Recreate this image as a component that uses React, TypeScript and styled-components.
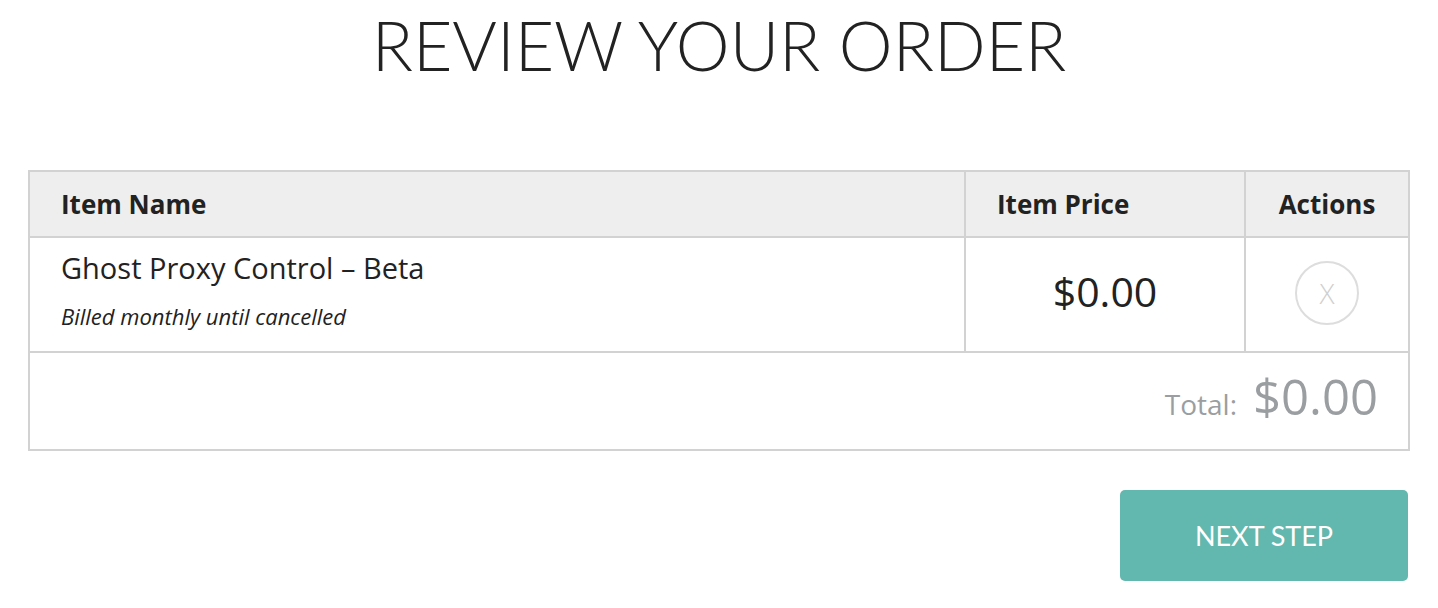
import React from "react";
import styled, { createGlobalStyle } from "styled-components";

const Global = createGlobalStyle`
  html, body { margin: 0; padding: 0; background: #fff; }
  body { font-family: "Open Sans", "Noto Sans", sans-serif; color: #222; }
`;

const Page = styled.div`
  padding: 0 28px;
  display: flex;
  flex-direction: column;
`;

const Title = styled.h1`
  margin: 0;
  padding-top: 0;
  height: 170px;
  text-align: center;
  font-family: Lato, sans-serif;
  font-weight: 300;
  font-size: 68px;
  line-height: 90px;
  color: #222;
  letter-spacing: 0;
`;

const Table = styled.table`
  width: 100%;
  border-collapse: collapse;
  table-layout: fixed;
  font-family: "Open Sans", "Noto Sans", sans-serif;
`;

const Th = styled.th<{ $align?: string; $w?: number }>`
  background: #eeeeee;
  border: 2px solid #d2d2d2;
  height: 66px;
  padding: 0 31px;
  text-align: ${(p) => p.$align || "left"};
  font-weight: 700;
  font-size: 26px;
  color: #222;
  width: ${(p) => (p.$w ? `${p.$w}px` : "auto")};
  box-sizing: border-box;
`;

const Td = styled.td<{ $align?: string }>`
  border: 2px solid #d2d2d2;
  height: 113px;
  padding: 0 31px;
  text-align: ${(p) => p.$align || "left"};
  vertical-align: middle;
`;

const ItemName = styled.div`
  font-size: 29px;
  line-height: 36px;
  color: #222;
  margin-top: -9px;
`;

const ItemNote = styled.div`
  font-size: 22px;
  line-height: 28px;
  font-style: italic;
  color: #222;
  margin-top: 16px;
`;

const Price = styled.div`
  font-size: 41px;
  line-height: 50px;
  color: #222;
  margin-top: -7px;
`;

const RemoveButton = styled.button`
  width: 64px;
  height: 64px;
  border-radius: 50%;
  border: 2px solid #dddddd;
  background: #fff;
  color: #d0d0d0;
  font-family: "Open Sans", sans-serif;
  font-size: 28px;
  font-weight: 300;
  display: flex;
  align-items: center;
  justify-content: center;
  padding: 0;
  margin: -4px auto 0;
  cursor: pointer;
`;

const TotalCell = styled.td`
  border: 2px solid #d2d2d2;
  height: 86px;
  padding: 0 30px 10px;
  text-align: right;
  color: #9a9ea1;
`;

const TotalLabel = styled.span`
  font-size: 28px;
  margin-right: 16px;
`;

const TotalValue = styled.span`
  font-size: 49px;
`;

const Footer = styled.div`
  display: flex;
  justify-content: flex-end;
  padding-top: 39px;
`;

const NextButton = styled.button`
  width: 288px;
  height: 91px;
  margin-right: 2px;
  border: none;
  border-radius: 5px;
  background: #62b8ae;
  color: #fff;
  font-family: Lato, sans-serif;
  font-size: 27px;
  font-weight: 400;
  cursor: pointer;
`;

export default function App() {
  return (
    <>
      <Global />
      <Page>
        <Title>REVIEW YOUR ORDER</Title>
        <Table>
          <thead>
            <tr>
              <Th>Item Name</Th>
              <Th $w={280}>Item Price</Th>
              <Th $w={164} $align="center">Actions</Th>
            </tr>
          </thead>
          <tbody>
            <tr>
              <Td>
                <ItemName>Ghost Proxy Control – Beta</ItemName>
                <ItemNote>Billed monthly until cancelled</ItemNote>
              </Td>
              <Td $align="center">
                <Price>$0.00</Price>
              </Td>
              <Td $align="center">
                <RemoveButton>X</RemoveButton>
              </Td>
            </tr>
            <tr>
              <TotalCell colSpan={3}>
                <TotalLabel>Total:</TotalLabel>
                <TotalValue>$0.00</TotalValue>
              </TotalCell>
            </tr>
          </tbody>
        </Table>
        <Footer>
          <NextButton>NEXT STEP</NextButton>
        </Footer>
      </Page>
    </>
  );
}
